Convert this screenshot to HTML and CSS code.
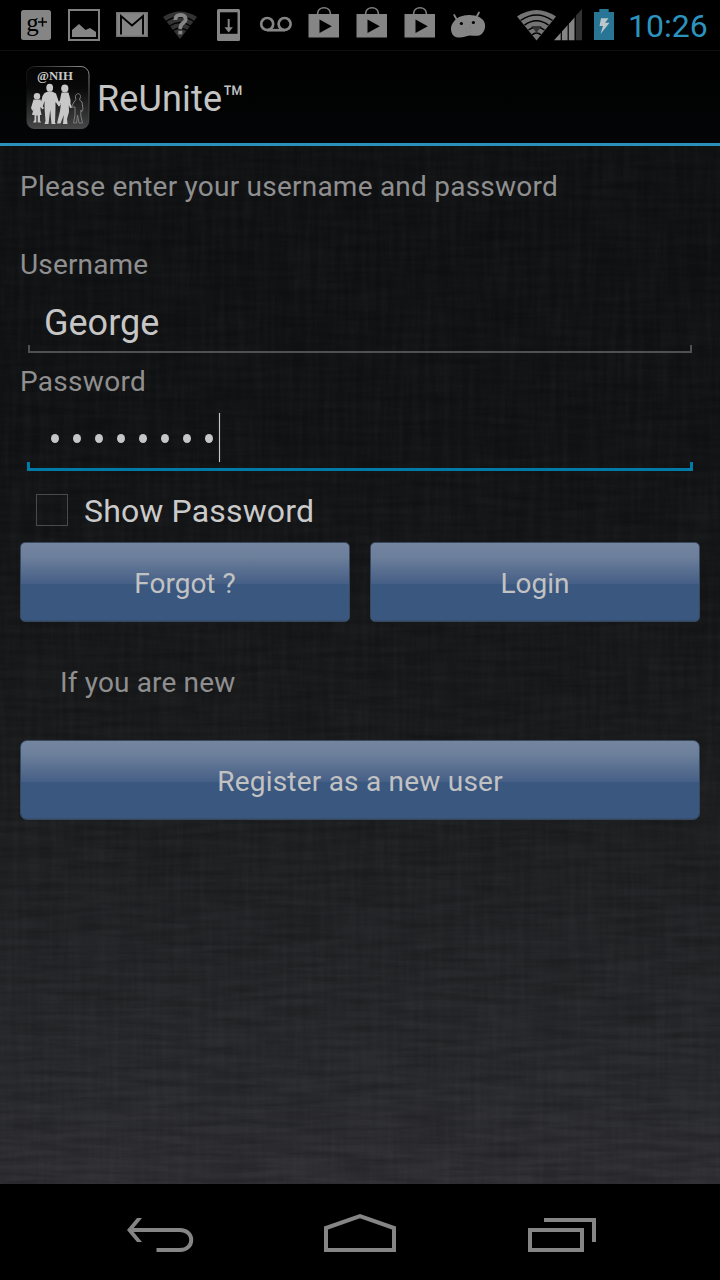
FILE: index.html
```html
<!DOCTYPE html>
<html lang="en">
<head>
<meta charset="utf-8">
<title>ReUnite</title>
<link rel="stylesheet" href="styles.css">
</head>
<body>
<svg class="defs" width="0" height="0" aria-hidden="true">
  <defs>
    <symbol id="bag" viewBox="0 0 48 50">
      <path d="M17.500 14.500C17.500 5.500 30.500 5.500 30.500 14.500" fill="none" stroke="#808080" stroke-width="1.700"/>
      <path d="M8.500 14H39V37.500H8.500Z" fill="#858585"/>
      <path d="M19.500 19.500V33L31.800 26.300Z" fill="#000"/>
    </symbol>
  </defs>
</svg>
<div class="screen">
  <header class="status">
    <div class="notifications">
      <svg class="slot" viewBox="0 0 48 50"><rect x="9" y="10" width="30" height="30" rx="2.500" fill="#858585"/><text class="gplus-g" x="14.300" y="30.500">g</text><path d="M26 22H35M30.500 17.500V26.500" stroke="#000" stroke-width="1.500"/></svg>
      <svg class="slot" viewBox="0 0 48 50"><rect x="9" y="10" width="30" height="30" fill="none" stroke="#808080" stroke-width="2"/><path d="M12 37V30L19 24L25.500 30L30 28L36 32V37Z" fill="#858585"/></svg>
      <svg class="slot" viewBox="0 0 48 50"><rect x="8" y="12" width="32" height="25" fill="#858585"/><rect x="8.700" y="12.700" width="30.600" height="23.600" fill="none" stroke="#707070" stroke-width="1.200"/><path d="M13 34.500V16L24 25.500L35 16V34.500" fill="none" stroke="#000" stroke-width="1.900"/></svg>
      <svg class="slot" viewBox="0 0 48 50"><path d="M7 17Q24 6 41 17L24 39Z" fill="#333"/><path d="M10 21.500Q24 12 38 21.500M13.500 26Q24 19 34.500 26M17 30.500Q24 26 31 30.500" stroke="#000" stroke-width="1.300" fill="none"/><path d="M19.300 20Q19.500 14.800 24.500 14.800Q29.700 15 29.700 19.200Q29.500 21.700 26.500 23.500Q24.300 25 24.300 29" fill="none" stroke="#858585" stroke-width="3.800"/><rect x="22.300" y="30.800" width="4" height="3.500" fill="#858585"/></svg>
      <svg class="slot" viewBox="0 0 48 50"><rect x="13" y="9" width="23" height="32" rx="1.500" fill="#858585"/><rect x="16" y="12.300" width="17.500" height="21.500" fill="#000"/><path d="M24.700 19V30" stroke="#858585" stroke-width="2"/><path d="M20.500 27.300H28.900L24.700 32.500Z" fill="#858585"/></svg>
      <svg class="slot" viewBox="0 0 48 50"><g fill="none" stroke="#858585" stroke-width="2.700"><circle cx="15.200" cy="24" r="6"/><circle cx="32.600" cy="24" r="6"/><path d="M15 30.200H33"/></g></svg>
      <svg class="slot"><use href="#bag"/></svg>
      <svg class="slot"><use href="#bag"/></svg>
      <svg class="slot"><use href="#bag"/></svg>
      <svg class="slot" viewBox="0 0 48 50"><path d="M13 20L10.200 15M32.500 17L35 12.500" stroke="#858585" stroke-width="1.800" stroke-linecap="round"/><path d="M9.500 22C13 17 18 15.300 23 15.200C31 14.500 38 17.500 40 21.500C42.500 26 40.500 32 37 34.500C34 36.800 30 35.500 26 35.500C21 36 18 38.500 12.500 37.200C8.500 36.500 7 32 7 28.500C7 26 8 24 9.500 22Z" fill="#858585"/><circle cx="17.400" cy="23.500" r="1.600"/><circle cx="29.400" cy="22.500" r="1.600"/><path d="M21.500 29h1m3-1h1m-4 4h1m3-1h1" stroke="#747474"/></svg>
    </div>
    <div class="system">
      <svg width="39" height="50" viewBox="0 0 39 50"><path d="M0 16.500Q19.500 3.500 39 16.500L19.500 40.500Z" fill="#747474"/><path d="M3.500 20.500Q19.500 9.500 35.500 20.500M7.500 25.200Q19.500 16.500 31.500 25.200M11.500 30Q19.500 24.200 27.500 30M15 34.800Q19.500 31.300 24 34.800" stroke="#000" stroke-width="1.500" fill="none"/><path d="M14.500 26H24.500L19.500 33Z" fill="#333"/></svg>
      <svg class="signal" width="28" height="50" viewBox="0 0 28 50"><path d="M0 40.300L21 17V40.300Z" fill="#858585"/><path d="M21.500 16L28 9V40.300H21.500Z" fill="#333"/><path d="M7.300 28V41M14.200 20V41M21.100 12V41" stroke="#000" stroke-width="1.200"/></svg>
      <svg class="battery" width="20" height="50" viewBox="0 0 20 50"><path d="M5.300 9H14.700V12H20V40H0V12H5.300Z" fill="#287595"/><path d="M7 18.200H14.500L11 22.700H15.500L6.500 34L9 26H5.500Z" fill="#bdc7cb"/></svg>
      <span class="clock">10:26</span>
    </div>
  </header>
  <div class="actionbar">
    <svg class="logo" width="64" height="64" viewBox="0 0 64 64">
      <defs><linearGradient id="lg" x1="0" y1="0" x2="0" y2="1"><stop offset="0" stop-color="#050505"/><stop offset=".35" stop-color="#090909"/><stop offset="1" stop-color="#484848"/></linearGradient>
      <linearGradient id="edge" x1="0" y1="1" x2="1" y2="0"><stop offset=".3" stop-color="#444" stop-opacity="0"/><stop offset="1" stop-color="#999"/></linearGradient></defs>
      <rect x=".5" y=".5" width="62.500" height="62.500" rx="8" fill="url(#lg)" stroke="url(#edge)"/>
      <text class="logo-text" x="11" y="14" textLength="36" lengthAdjust="spacingAndGlyphs">@NIH</text>
      <g fill="#c8c8c8">
        <circle cx="11" cy="30.300" r="3.200"/><path d="M7.500 33.500H14.500L16.500 40L18 42L16.500 43.500L14.500 41V44L15.500 49H14V54.500L15 56.500H11.700V49.500H10.300V56.500H7L8.500 54V49H6L7.500 43L6.500 45L5 42Z"/>
        <ellipse cx="23.700" cy="21.800" rx="3.400" ry="4"/><path d="M18.500 27L22 25.500H26L30 27.500L32.500 35L35 38.500L33 40.500L29.500 36V42L29 57L30 58H25.500L24.200 44L22.500 58H18.500L19.500 55L18.500 42V35L16.500 41.500L14 40L16.500 30Z"/>
        <ellipse cx="38.800" cy="22.500" rx="3.600" ry="4"/><path d="M35.500 26.500H42.500L44.500 34V38L46.500 41.500L44 42L42.800 39L43 46L41 53L41.500 58H37L37.800 49L34.500 57.500H31L34 45L35 37L33 40.500L31.500 38.500L34 34Z"/>
      </g>
      <g fill="none" stroke="#7d7d7d" stroke-width="1"><path d="M50 33.500C47.500 27 54.500 26 54.500 30.500L53.500 34L56 36L57 43L55.500 46L55 44L54.700 49L56.500 57H53L51.500 49L50.500 57H47.500L49 49V41L45.500 41L48 36Z"/></g>
    </svg>
    <h1 class="title">ReUnite<span class="tm">™</span></h1>
  </div>
  <main class="content">
    <svg class="texture" width="720" height="1038" aria-hidden="true">
      <filter id="warp" x="0" y="0" width="100%" height="100%" color-interpolation-filters="sRGB"><feTurbulence type="fractalNoise" baseFrequency=".16 .012" numOctaves="3" seed="4"/><feColorMatrix values="0 0 0 0 .5  0 0 0 0 .5  0 0 0 0 .5  1.600 0 0 0 -.5"/></filter>
      <filter id="weft" x="0" y="0" width="100%" height="100%" color-interpolation-filters="sRGB"><feTurbulence type="fractalNoise" baseFrequency=".015 .16" numOctaves="3" seed="8"/><feColorMatrix values="0 0 0 0 0  0 0 0 0 0  0 0 0 0 0  1.600 0 0 0 -.5"/></filter>
      <rect class="warp" width="720" height="1038" filter="url(#warp)"/>
      <rect class="weft" width="720" height="1038" filter="url(#weft)"/>
    </svg>
    <form class="form">
      <p class="prompt">Please enter your username and password</p>
      <div class="label user-label">Username</div>
      <div class="field"><span class="value">George</span><svg class="line" width="664" height="8" viewBox="0 0 664 8"><path d="M1 0V7H663V0" fill="none" stroke="#505050" stroke-width="2"/></svg></div>
      <div class="label pass-label">Password</div>
      <div class="field password"><span class="dots"><i></i><i></i><i></i><i></i><i></i><i></i><i></i><i></i></span><span class="caret"></span><svg class="line" width="666" height="9" viewBox="0 0 666 9"><path d="M1.500 0V7.500H664.500V0" fill="none" stroke="#007ba8" stroke-width="3"/></svg></div>
      <div class="check"><span class="box"></span><span class="check-text">Show Password</span></div>
      <div class="buttons"><button type="button" class="btn">Forgot ?</button><button type="button" class="btn">Login</button></div>
      <p class="new">If you are new</p>
      <button type="button" class="btn wide">Register as a new user</button>
    </form>
  </main>
  <nav class="nav">
    <svg width="720" height="96" viewBox="0 0 720 96" fill="none" stroke="#858585" stroke-width="4">
      <path d="M131 46H180C195 46 195 66 180 66H156.500"/><path d="M137 34H142L132 46L142 58H137L127 46Z" fill="#858585" stroke="none"/>
      <path d="M326 66V44L360 32L394 44V66Z"/>
      <path d="M530 46H582V66H530ZM544 36H594V58"/>
    </svg>
  </nav>
</div>
</body>
</html>
```
FILE: styles.css
```css
* { box-sizing: border-box; }
body { margin: 0; background: #000; font-family: Roboto, "Liberation Sans", sans-serif; }
.defs { position: absolute; }
.screen { width: 720px; height: 1280px; display: flex; flex-direction: column; overflow: hidden; }
.status { height: 50px; display: flex; justify-content: space-between; padding: 0 12px; background: #000; }
.notifications, .system { display: flex; }
.slot { width: 48px; height: 50px; }
.gplus-g { font: 25px "Liberation Serif", serif; }
.signal { margin-left: -2px; }
.battery { margin-left: 12px; }
.clock { width: 80px; margin-left: 14px; font-size: 32px; line-height: 52px; color: #2c93bf; white-space: nowrap; }
.actionbar { height: 96px; display: flex; align-items: center; padding: 1px 25px 0; border-top: 1px solid #101010; border-bottom: 3px solid #2a91bb; background: linear-gradient(#000, #040506); }
.logo { margin-left: 1px; }
.logo-text { font: bold 13px "Liberation Serif", serif; fill: #c8c8c8; }
.title { margin: 0 0 0 7px; padding-top: 2px; font-size: 36px; line-height: 42px; font-weight: 400; letter-spacing: .15px; color: #c4c4c4; }
.content { height: 1038px; position: relative; background: linear-gradient(#111214 0%, #131416 28%, #1b1c1e 58%, #26272a 80%, #303035 100%); }
.texture { position: absolute; inset: 0; }
.warp { opacity: .06; }
.weft { opacity: .24; }
.form { position: relative; padding: 22px 20px 0; }
.prompt, .label, .new { margin: 0; font-size: 28px; line-height: 38px; color: #8f8f8f; white-space: nowrap; letter-spacing: .15px; }
.prompt { letter-spacing: .23px; }
.user-label { margin-top: 40px; }
.field { height: 69px; display: flex; flex-direction: column; justify-content: space-between; padding: 18px 8px 0; }
.value { padding-left: 16px; font-size: 36px; line-height: 42px; color: #c6c6c6; }
.pass-label { margin-top: 10px; letter-spacing: .3px; }
.field.password { height: 70px; display: grid; grid-template-columns: 192px auto; grid-template-rows: 61px 9px; padding: 0 7px; }
.dots { display: flex; gap: 14px; align-items: center; padding: 0 0 1px 24px; margin-top: 14px; }
.dots i { width: 8px; height: 9px; border-radius: 50%; background: #c6c6c6; }
.caret { width: 1px; height: 49px; margin-top: 12px; background: #c8c8c8; box-shadow: 0 0 1px #777; }
.password .line { grid-column: 1 / 3; }
.check { height: 71px; display: flex; align-items: center; padding: 7px 16px 0; }
.box { width: 32px; height: 32px; border: 1px solid #4a4a4a; margin-right: 16px; }
.check-text { font-size: 32px; color: #cacaca; line-height: 40px; padding-top: 2px; letter-spacing: .15px; }
.buttons { display: flex; gap: 20px; }
.btn { flex: 1; height: 80px; padding: 2px 0 0; border: 1px solid #38485f; border-radius: 5px; background: linear-gradient(#73859f 0%, #6c7f9b 18%, #465f86 52%, #3a577f 52%, #3a577f 98%, #354b6b 100%); color: #c2c2c2; font: 28px Roboto, "Liberation Sans", sans-serif; }
.new { margin-top: 42px; padding-left: 40px; }
.wide { width: 100%; margin-top: 38px; border-radius: 7px; display: block; letter-spacing: .22px; }
.nav { height: 96px; background: #000; }
.nav svg { display: block; }
```
